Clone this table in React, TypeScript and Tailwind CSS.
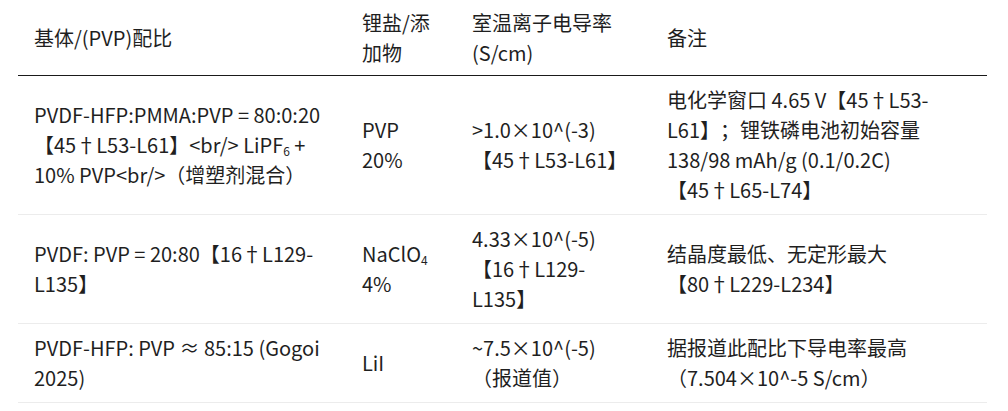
const rows = [
  {
    id: 1,
    base: (
      <>
        PVDF-HFP:PMMA:PVP = 80:0:20【45†L53-L61】{"<br/>"} LiPF<sub className="text-[0.6em]">6</sub> + 10% PVP{"<br/>"}（增塑剂混合）
      </>
    ),
    salt: "PVP 20%",
    conductivity: ">1.0×10^(-3)【45†L53-L61】",
    note: "电化学窗口 4.65 V【45†L53-L61】；锂铁磷电池初始容量 138/98 mAh/g (0.1/0.2C)【45†L65-L74】",
  },
  {
    id: 2,
    base: "PVDF: PVP = 20:80【16†L129-L135】",
    salt: (
      <>
        NaClO<sub className="text-[0.6em]">4</sub> 4%
      </>
    ),
    conductivity: "4.33×10^(-5)【16†L129-L135】",
    note: "结晶度最低、无定形最大【80†L229-L234】",
  },
  {
    id: 3,
    base: "PVDF-HFP: PVP ≈ 85:15 (Gogoi 2025)",
    salt: "LiI",
    conductivity: "~7.5×10^(-5)（报道值）",
    note: "据报道此配比下导电率最高（7.504×10^-5 S/cm）",
  },
];

export default function App() {
  return (
    <div className="min-h-screen bg-white font-['Noto_Sans_CJK_SC','Noto_Sans',sans-serif] text-[20px] leading-[30px] text-[#1f1f1f] [text-spacing-trim:space-all]">
      <table className="ml-[18px] w-[969px] table-fixed border-collapse">
        <colgroup>
          <col className="w-[328px]" />
          <col className="w-[110px]" />
          <col className="w-[195px]" />
          <col className="w-[336px]" />
        </colgroup>
        {/* Header */}
        <thead>
          <tr className="border-b border-[#1a1a1a]">
            <th className="px-4 pt-2 pb-[7px] text-left align-middle font-normal">基体/(PVP)配比</th>
            <th className="px-4 pt-2 pb-[7px] text-left align-middle font-normal">锂盐/添加物</th>
            <th className="px-4 pt-2 pb-[7px] text-left align-middle font-normal">室温离子电导率 (S/cm)</th>
            <th className="px-4 pt-2 pb-[7px] text-left align-middle font-normal">备注</th>
          </tr>
        </thead>
        <tbody>
          {rows.map((row) => (
            <tr key={row.id} className="border-b border-[#ececec]">
              <td className="px-4 py-[9px] align-middle">{row.base}</td>
              <td className="px-4 py-[9px] align-middle">{row.salt}</td>
              <td className="px-4 py-[9px] align-middle">{row.conductivity}</td>
              <td className="px-4 py-[9px] align-middle">{row.note}</td>
            </tr>
          ))}
        </tbody>
      </table>
    </div>
  );
}
